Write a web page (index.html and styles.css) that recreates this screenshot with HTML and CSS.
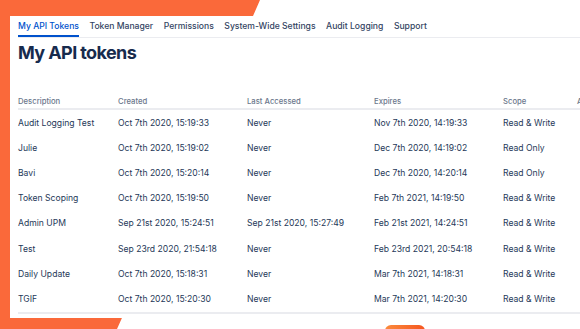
FILE: index.html
```html
<!DOCTYPE html>
<html lang="en">
<head>
  <meta charset="UTF-8" />
  <title>My API tokens</title>
  <link rel="stylesheet" href="styles.css">
</head>
<body>
  <div class="backdrop"></div>
  <div class="pill"></div>

  <div class="card">
    <nav class="tabs">
      <a class="tab active">My API Tokens</a>
      <a class="tab">Token Manager</a>
      <a class="tab">Permissions</a>
      <a class="tab">System-Wide Settings</a>
      <a class="tab">Audit Logging</a>
      <a class="tab">Support</a>
    </nav>

    <h1>My API tokens</h1>

    <div class="table">
      <div class="row head">
        <span>Description</span><span>Created</span><span>Last Accessed</span><span>Expires</span><span>Scope</span><span>Actions</span>
      </div>
      <div class="row">
        <span>Audit Logging Test</span><span>Oct 7th 2020, 15:19:33</span><span>Never</span><span>Nov 7th 2020, 14:19:33</span><span>Read &amp; Write</span><span></span>
      </div>
      <div class="row">
        <span>Julie</span><span>Oct 7th 2020, 15:19:02</span><span>Never</span><span>Dec 7th 2020, 14:19:02</span><span>Read Only</span><span></span>
      </div>
      <div class="row">
        <span>Bavi</span><span>Oct 7th 2020, 15:20:14</span><span>Never</span><span>Dec 7th 2020, 14:20:14</span><span>Read Only</span><span></span>
      </div>
      <div class="row">
        <span>Token Scoping</span><span>Oct 7th 2020, 15:19:50</span><span>Never</span><span>Feb 7th 2021, 14:19:50</span><span>Read &amp; Write</span><span></span>
      </div>
      <div class="row">
        <span>Admin UPM</span><span>Sep 21st 2020, 15:24:51</span><span>Sep 21st 2020, 15:27:49</span><span>Feb 21st 2021, 14:24:51</span><span>Read &amp; Write</span><span></span>
      </div>
      <div class="row">
        <span>Test</span><span>Sep 23rd 2020, 21:54:18</span><span>Never</span><span>Feb 23rd 2021, 20:54:18</span><span>Read &amp; Write</span><span></span>
      </div>
      <div class="row">
        <span>Daily Update</span><span>Oct 7th 2020, 15:18:31</span><span>Never</span><span>Mar 7th 2021, 14:18:31</span><span>Read &amp; Write</span><span></span>
      </div>
      <div class="row">
        <span>TGIF</span><span>Oct 7th 2020, 15:20:30</span><span>Never</span><span>Mar 7th 2021, 14:20:30</span><span>Read &amp; Write</span><span></span>
      </div>
    </div>
  </div>
</body>
</html>
```

FILE: styles.css
```css
:root {
  --orange: #fa693a;
  --text: #253858;
  --muted: #6b778c;
  --blue: #0052cc;
  --line: #ebecf0;
}

html, body {
  margin: 0;
  height: 100%;
}

body {
  position: relative;
  overflow: hidden;
  background: #fff;
  font-family: Inter, "Noto Sans", sans-serif;
  color: var(--text);
}

.backdrop {
  position: absolute;
  inset: 0;
  background: var(--orange);
  clip-path: polygon(0 0, 260px 0, 253px 16px, 253px 300px, 130px 300px, 117px 329px, 0 329px);
}

.pill {
  position: absolute;
  left: 385px;
  top: 325px;
  width: 40px;
  height: 12px;
  border-radius: 6px;
  background: linear-gradient(90deg, #fb8a3c, #f5561f);
}

.card {
  position: relative;
  margin: 16px 0 0 10px;
  width: 640px;
  height: 302px;
  background: #fff;
  padding-left: 8px;
  box-sizing: border-box;
}

.tabs {
  display: flex;
  gap: 10.5px;
  border-bottom: 1px solid var(--line);
  height: 20px;
  padding-top: 1px;
  align-items: center;
  font-size: 8.6px;
  font-weight: 500;
}

.tab {
  color: #344563;
  height: 20px;
  line-height: 19px;
  box-sizing: border-box;
}

.tab.active {
  color: var(--blue);
  border-bottom: 2px solid var(--blue);
}

h1 {
  margin: 3px 0 0;
  font-size: 18px;
  font-weight: 700;
  line-height: 24px;
  letter-spacing: -0.6px;
  color: #172b4d;
}

.table {
  margin-top: 30px;
}

.row {
  display: grid;
  grid-template-columns: 100px 129px 127px 129px 74px 60px;
  height: 25.2px;
  align-items: center;
  font-size: 8.6px;
  white-space: nowrap;
}

.row.head {
  height: 15px;
  box-sizing: border-box;
  border-bottom: 2px solid var(--line);
  font-size: 7.7px;
  font-weight: 500;
  color: var(--muted);
}

.row:last-child {
  border-bottom: 2px solid var(--line);
}
```
